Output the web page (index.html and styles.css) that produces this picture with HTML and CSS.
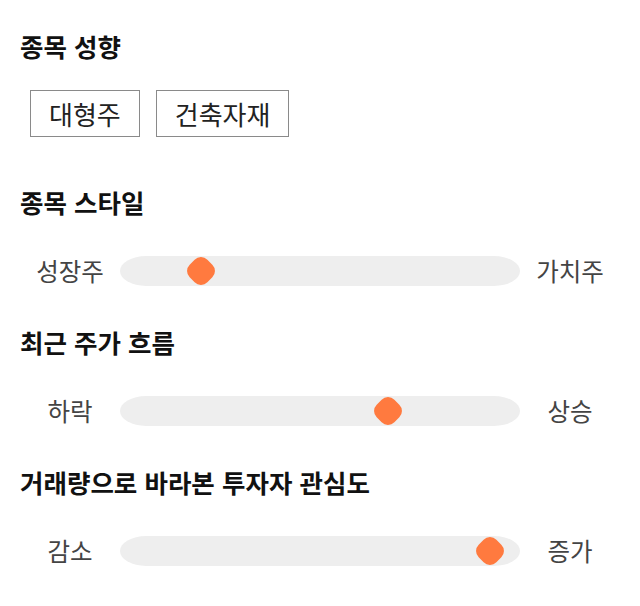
FILE: index.html
```html
<!DOCTYPE html>
<html lang="ko">
<head>
<meta charset="utf-8">
<link rel="stylesheet" href="styles.css">
</head>
<body>
<main class="page">
  <section class="section section--tags">
    <h2 class="title">종목 성향</h2>
    <div class="tags">
      <span class="tag">대형주</span>
      <span class="tag">건축자재</span>
    </div>
  </section>
  <section class="section">
    <h2 class="title">종목 스타일</h2>
    <div class="slider">
      <span class="label">성장주</span>
      <div class="track"><span class="thumb" style="left: 20.25%"></span></div>
      <span class="label">가치주</span>
    </div>
  </section>
  <section class="section">
    <h2 class="title">최근 주가 흐름</h2>
    <div class="slider">
      <span class="label">하락</span>
      <div class="track"><span class="thumb" style="left: 67%"></span></div>
      <span class="label">상승</span>
    </div>
  </section>
  <section class="section">
    <h2 class="title">거래량으로 바라본 투자자 관심도</h2>
    <div class="slider">
      <span class="label">감소</span>
      <div class="track"><span class="thumb" style="left: 92.5%"></span></div>
      <span class="label">증가</span>
    </div>
  </section>
</main>
</body>
</html>
```

FILE: styles.css
```css
* { box-sizing: border-box; }
html, body { margin: 0; background: #fff; }
body {
  font-family: "Noto Sans CJK KR", "Noto Sans", sans-serif;
  color: #111;
}
.page {
  padding: 30px 20px 20px;
  display: flex;
  flex-direction: column;
  gap: 40px;
}
.section {
  display: flex;
  flex-direction: column;
  gap: 38px;
}
.section--tags {
  gap: 28px;
  margin-bottom: 9px;
}
.title {
  margin: 0;
  font-size: 25.5px;
  line-height: 32px;
  font-weight: 700;
  color: #111;
}
.tags {
  display: flex;
  gap: 16px;
  padding-left: 10px;
}
.tag {
  border: 1px solid #8a8a8a;
  padding: 5px 18px;
  font-size: 26px;
  line-height: 35px;
  color: #222;
}
.slider {
  display: flex;
  align-items: center;
}
.label {
  width: 100px;
  text-align: center;
  font-size: 24.5px;
  line-height: 30px;
  color: #444;
}
.track {
  flex: 1;
  height: 30px;
  background: #eeeeee;
  border-radius: 26px / 15px;
  position: relative;
}
.thumb {
  position: absolute;
  top: 50%;
  width: 25px;
  height: 25px;
  background: #ff7a3f;
  border-radius: 9px;
  transform: translate(-50%, -50%) rotate(45deg);
}
```
